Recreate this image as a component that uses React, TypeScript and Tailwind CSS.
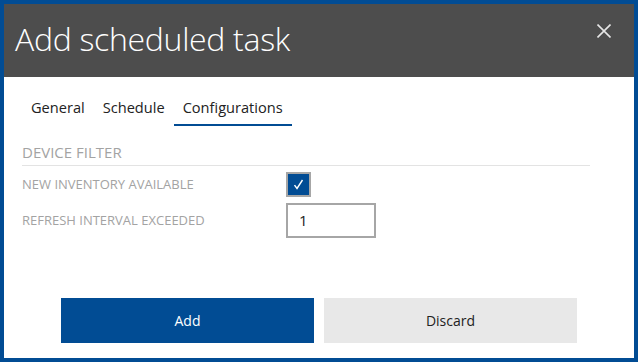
const tabs = ["General", "Schedule", "Configurations"];

export default function App() {
  return (
    <div
      className="flex h-[362px] w-[638px] flex-col border-4 border-[#014c94] bg-white"
      style={{ fontFamily: '"Open Sans", "Noto Sans", sans-serif' }}
    >
      <div className="flex h-[73px] shrink-0 items-start justify-between bg-[#4d4d4d] pl-[11px] pr-[23px]">
        <h1 className="mt-[15px] text-[32px] leading-[40px] font-light tracking-[-0.3px] text-white">
          Add scheduled task
        </h1>
        <button className="mt-[20px] text-[#e6e6e6]">
          <svg width="14" height="14" viewBox="0 0 14 14" fill="none">
            <path d="M0.5 0.5 L13.5 13.5 M13.5 0.5 L0.5 13.5" stroke="currentColor" strokeWidth="1.6" />
          </svg>
        </button>
      </div>

      <div className="flex flex-1 flex-col pl-[18px] pr-[44px]">
        <div className="mt-[20px] flex">
          {tabs.map((t) => (
            <div
              key={t}
              className={
                "px-[9px] pb-[7px] text-[14.6px] leading-[20px] text-[#222] " +
                (t === "Configurations" ? "border-b-2 border-[#014c94]" : "border-b-2 border-transparent")
              }
            >
              {t}
            </div>
          ))}
        </div>

        <div className="mt-[16px] border-b border-[#e3e3e3] pb-[3px] text-[15px] leading-[20px] text-[#a3a3a3]">
          DEVICE FILTER
        </div>

        <div className="mt-[6px] flex items-center">
          <span className="w-[264px] text-[13px] text-[#a3a3a3]">NEW INVENTORY AVAILABLE</span>
          <span className="flex h-[25px] w-[25px] items-center justify-center border-2 border-[#a6a6a6] bg-[#014c94]">
            <svg width="13" height="13" viewBox="0 0 13 13" fill="none">
              <path d="M2.5 7.2 L5 10.5 L10.5 2" stroke="white" strokeWidth="1.4" />
            </svg>
          </span>
        </div>

        <div className="mt-[6px] flex items-center">
          <span className="w-[264px] text-[13px] text-[#a3a3a3]">REFRESH INTERVAL EXCEEDED</span>
          <div className="flex h-[35px] w-[90px] items-center border-2 border-[#a6a6a6] pl-[11px] text-[15px] text-[#222]">
            1
          </div>
        </div>

        <div className="mt-auto mb-[15px] flex gap-[10px] pl-[39px]">
          <button className="h-[45px] w-[253px] bg-[#014c94] text-[14px] text-white">Add</button>
          <button className="h-[45px] w-[253px] bg-[#e8e8e8] text-[14px] text-[#222]">Discard</button>
        </div>
      </div>
    </div>
  );
}
